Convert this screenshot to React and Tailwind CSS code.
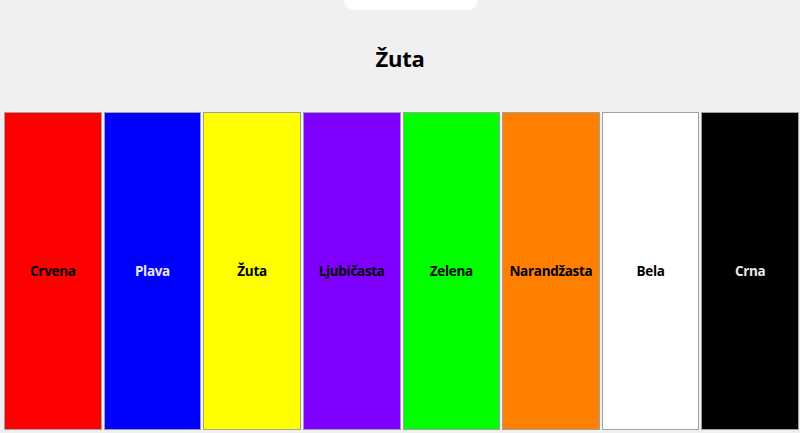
const COLORS = [
  { name: 'Crvena', bg: 'bg-[#ff0000]', text: 'text-black' },
  { name: 'Plava', bg: 'bg-[#0000ff]', text: 'text-[#e8e8e8]' },
  { name: 'Žuta', bg: 'bg-[#ffff00]', text: 'text-black' },
  { name: 'Ljubičasta', bg: 'bg-[#8000ff]', text: 'text-black' },
  { name: 'Zelena', bg: 'bg-[#00ff00]', text: 'text-black' },
  { name: 'Narandžasta', bg: 'bg-[#ff8000]', text: 'text-black' },
  { name: 'Bela', bg: 'bg-white', text: 'text-black' },
  { name: 'Crna', bg: 'bg-black', text: 'text-[#e8e8e8]' },
]

export default function App() {
  return (
    <div className="w-[800px] h-[433px] bg-[#f0f0f0] overflow-hidden font-['Open_Sans',sans-serif]">
      {/* top tab, mostly off-screen */}
      <div className="ml-[344px] w-[134px] h-[10px] bg-white rounded-b-[10px]" />

      <h1 className="h-[102px] flex items-center justify-center pb-[6px] text-[22px] font-bold text-black tracking-[-0.2px]">
        Žuta
      </h1>

      <div className="flex gap-[2px] pl-[4px] pr-[1px] h-[318px]">
        {COLORS.map((c) => (
          <div
            key={c.name}
            className={`flex-1 flex items-center justify-center border border-[#a0a0a0] ${c.bg}`}
          >
            <span className={`text-[13.5px] font-bold tracking-[-0.3px] ${c.text}`}>{c.name}</span>
          </div>
        ))}
      </div>
    </div>
  )
}
